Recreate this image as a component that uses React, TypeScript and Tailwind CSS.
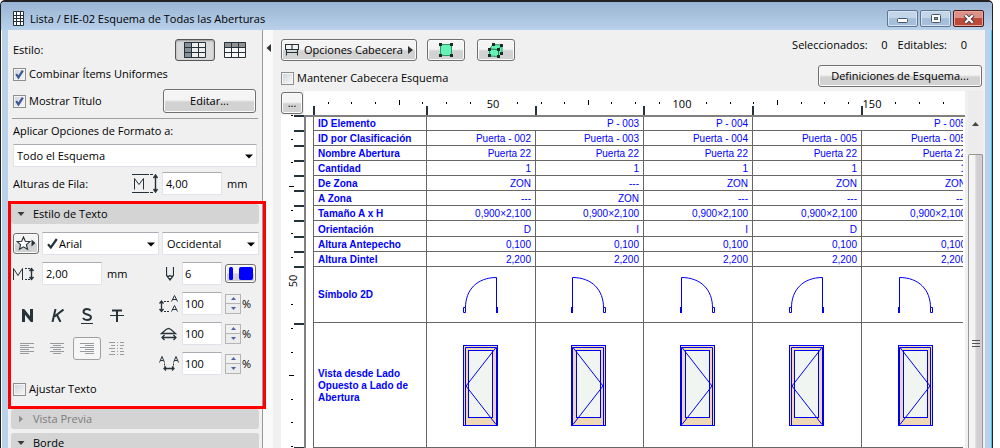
import React, { useState } from 'react';

const INK = '#26323a';
const BLUE = '#0000f0';

const BUTTON =
  'flex items-center justify-center rounded-[3px] border border-[#707070] bg-linear-to-b from-[#f4f4f4] from-45% to-[#d2d2d2] to-55% text-black shadow-[inset_0_0_0_1px_#fbfbfb]';
const FIELD = 'h-[23px] border border-[#e2e3ea] border-t-[#abadb3] bg-white text-[11px] text-black outline-none';

function Check({ id, label, on = false }: { id: string; label: string; on?: boolean }) {
  const [checked, setChecked] = useState(on);
  return (
    <div className="flex items-center gap-[3px]">
      <span className="relative block size-[13px]">
        <input
          id={id}
          type="checkbox"
          checked={checked}
          onChange={(e) => setChecked(e.target.checked)}
          className="block size-[13px] appearance-none border border-[#8e8f8f] bg-linear-to-br from-[#cfd4da] to-[#f8f8f8] shadow-[inset_0_0_0_1px_#f4f4f4]"
        />
        {checked && (
          <svg className="pointer-events-none absolute inset-0" width="13" height="13" viewBox="0 0 13 13">
            <path d="M3.2 6 L5.4 9.4 L9.8 2.6" fill="none" stroke="#3f5796" strokeWidth="2.2" />
          </svg>
        )}
      </span>
      <label htmlFor={id} className="whitespace-nowrap">{label}</label>
    </div>
  );
}

function Select({ id, label, options, className, pad }: { id: string; label?: string; options: string[]; className: string; pad: string }) {
  return (
    <div className={`relative ${className}`}>
      <select id={id} aria-label={label} className={`${FIELD} block w-full appearance-none ${pad}`}>
        {options.map((o) => (
          <option key={o}>{o}</option>
        ))}
      </select>
      <svg className="pointer-events-none absolute top-[10px] right-1" width="8" height="5" viewBox="0 0 8 5">
        <path d="M0 0.5 H8 L4 4.5 Z" fill="#000" />
      </svg>
    </div>
  );
}

function Spinner({ label }: { label: string }) {
  return (
    <div className="ml-[3px] flex h-5 w-4 flex-col">
      <button aria-label={`Aumentar ${label}`} className="flex flex-1 items-center justify-center border border-[#b4b4b4] bg-[#f1f1f1]">
        <svg width="5" height="3" viewBox="0 0 5 3"><path d="M2.5 0 L5 3 H0 Z" fill="#4a62a8" /></svg>
      </button>
      <button aria-label={`Reducir ${label}`} className="flex flex-1 items-center justify-center border border-t-0 border-[#b4b4b4] bg-[#ececec]">
        <svg width="5" height="3" viewBox="0 0 5 3"><path d="M0 0 H5 L2.5 3 Z" fill="#4a62a8" /></svg>
      </button>
    </div>
  );
}

function SectionHeader({ label, open }: { label: string; open: boolean }) {
  return (
    <button
      aria-expanded={open}
      className={`flex h-5 items-center gap-2 rounded-[3px] bg-[#d4d4d4] pl-1.5 text-left ${open ? 'text-black' : 'text-[#7d7d7d]'}`}
    >
      <svg width="8" height="8" viewBox="0 0 8 8">
        {open ? <path d="M0.5 2 H7.5 L4 6 Z" fill="#3a3a3a" /> : <path d="M2 0.5 V7.5 L6 4 Z" fill="#909090" />}
      </svg>
      {label}
    </button>
  );
}

function GridIcon({ side }: { side: 'left' | 'top' }) {
  return (
    <svg width="22" height="16" viewBox="0 0 22 16">
      <rect x="0.5" y="0.5" width="21" height="15" fill="#fff" fillOpacity="0.5" />
      {side === 'left' ? <rect x="0" y="0" width="7" height="16" fill="#87919a" /> : <rect x="0" y="0" width="22" height="5" fill="#8f8f94" />}
      <path d="M0.5 0.5 H21.5 V15.5 H0.5 Z M0 5.5 H22 M0 10.5 H22 M7.5 0 V16 M14.5 0 V16" fill="none" stroke={INK} />
    </svg>
  );
}

function AlignIcon({ kind }: { kind: 'left' | 'center' | 'right' | 'justify' }) {
  const paths = {
    left: 'M1 .5H15M1 2.5H10M1 4.5H15M1 6.5H10M1 8.5H15M1 10.5H10',
    center: 'M1 .5H15M4 2.5H12M1 4.5H15M4 6.5H12M1 8.5H15M4 10.5H12',
    right: 'M1 .5H15M6 2.5H15M1 4.5H15M6 6.5H15M1 8.5H15M6 10.5H15',
    justify:
      'M0 .5H6M8 .5H9M11 .5H15M2 3.5H6M8 3.5H9M11 3.5H15M0 6.5H6M8 6.5H9M11 6.5H14M2 9.5H6M8 9.5H9M11 9.5H15M0 12.5H6M8 12.5H9M11 12.5H15',
  };
  return (
    <svg width="16" height={kind === 'justify' ? 13 : 11} viewBox={kind === 'justify' ? '0 0 16 13' : '0 0 16 11'}>
      <path d={paths[kind]} fill="none" stroke="#989c9f" />
    </svg>
  );
}

function StyleTextSection() {
  const scales = [
    {
      label: 'Interlineado',
      icon: (
        <>
          <path d="M2.5 6.5V16M0.5 8.5L2.5 6L4.5 8.5M0.5 14L2.5 16.5L4.5 14" strokeWidth="1.3" />
          <path d="M5 6.5H11M5 16.5H11" strokeDasharray="2 1" />
          <path d="M12.5 6.5L15.5 0.5L18.5 6.5M13.5 4.5H17.5M12.5 16.5L15.5 10.5L18.5 16.5M13.5 14.5H17.5" />
        </>
      ),
    },
    {
      label: 'Ancho',
      icon: (
        <>
          <path d="M2.5 8.5L7 4.5L9.5 3.5L12 4.5L16.5 8.5ZM4 12.5H16M5.5 10L3 12.5L5.5 15M14.5 10L17 12.5L14.5 15" strokeWidth="1.3" />
        </>
      ),
    },
    {
      label: 'Espaciado',
      icon: (
        <>
          <path d="M0.5 7.5L3 1.5L5.5 7.5M1.5 5.5H4.5M14.5 7.5L17 1.5L19.5 7.5M15.5 5.5H18.5" />
          <path d="M5.5 8.5V12M14.5 8.5V12" strokeDasharray="2 1" />
          <path d="M5 13.5H15M7 11.5L5 13.5L7 15.5M13 11.5L15 13.5L13 15.5" strokeWidth="1.3" />
        </>
      ),
    },
  ];
  return (
    <section className="relative z-10 mt-1.5 -mr-1 flex flex-col border-3 border-[#ff0000] pb-[7px]">
      <div className="mr-1 flex flex-col"><SectionHeader label="Estilo de Texto" open /></div>
      <div className="mt-2 mr-1 ml-0.5 flex items-center gap-[3px]">
        <button aria-label="Favoritos" className={`${BUTTON} h-[21px] w-[26px]`}>
          <svg width="20" height="15" viewBox="0 0 20 15">
            <path d="M7.5 1 L9.3 5.3 L14 5.7 L10.4 8.7 L11.6 13.3 L7.5 10.8 L3.4 13.3 L4.6 8.7 L1 5.7 L5.7 5.3 Z" fill="#fff" stroke={INK} strokeWidth="1.1" />
            <path d="M15.5 3.5 V10.5 L19.5 7 Z" fill={INK} />
          </svg>
        </button>
        <div className="relative w-[117px]">
          <Select id="fuente" label="Fuente" options={['Arial']} className="w-full" pad="pl-4" />
          <svg className="pointer-events-none absolute top-1.5 left-[5px]" width="11" height="11" viewBox="0 0 11 11">
            <path d="M1 6.2 L3.8 9.5 L9.8 1" fill="none" stroke={INK} strokeWidth="2.2" />
          </svg>
        </div>
        <Select id="alfabeto" label="Alfabeto" options={['Occidental']} className="flex-1" pad="pl-1" />
      </div>
      <div className="mt-[7px] mr-[7px] ml-0.5 flex items-center">
        <svg width="29" height="14" viewBox="0 0 29 14" fill="none" stroke={INK}>
          <path d="M0.5 13V1.5L5 8.5L9.5 1.5V13" />
          <path d="M12 1.5H17M12 12.5H17" strokeDasharray="2 1" />
          <path d="M18.5 2V12M16.5 4L18.5 1.5L20.5 4M16.5 10L18.5 12.5L20.5 10" strokeWidth="1.4" />
        </svg>
        <input aria-label="Tamaño de texto" defaultValue="2,00" className={`${FIELD} w-[60px] pl-[3px]`} />
        <span className="ml-[5px]">mm</span>
        <svg className="ml-auto" width="8" height="14" viewBox="0 0 8 14" fill="none" stroke={INK}>
          <path d="M0.5 0V8.5L4 13L7.5 8.5V0M0.5 8.5L2.5 9.5L4 8.5L5.5 9.5L7.5 8.5M4 11V13" strokeWidth="1.2" />
        </svg>
        <input aria-label="Pluma" defaultValue="6" className={`${FIELD} ml-2 w-10 pl-0.5`} />
        <button aria-label="Color de pluma" className={`${BUTTON} ml-[3px] h-[19px] w-[31px]`}>
          <svg width="24" height="13" viewBox="0 0 24 13" fill="#0000ff">
            <rect x="0" y="0" width="4" height="13" rx="1.5" />
            <rect x="10" y="0" width="14" height="13" rx="2" />
          </svg>
        </button>
      </div>
      <div className="mt-[7px] mr-[7px] flex justify-between">
        <div className="flex flex-col gap-2.5 pt-3 pl-0.5">
          <div className="flex h-[23px] items-center gap-0.5">
            <button aria-label="Negrita" className="flex w-7 justify-center">
              <svg width="13" height="13" viewBox="0 0 13 13"><path d="M2.5 13V1.5L10.5 11.5V0" fill="none" stroke={INK} strokeWidth="3" /></svg>
            </button>
            <button aria-label="Cursiva" className="flex w-7 justify-center">
              <svg width="13" height="13" viewBox="0 0 13 13" fill="none" stroke={INK} strokeWidth="2"><path d="M4.5 0L1.5 13M12.5 0.5L3.5 7.5M6 6L9.5 13" /></svg>
            </button>
            <button aria-label="Subrayado" className="flex w-7 justify-center">
              <svg width="14" height="16" viewBox="0 0 14 16" fill="none" stroke={INK}>
                <path d="M10.5 2.5C9.5 1.2 8.5 1 7 1C5 1 3.5 2 3.5 3.8C3.5 7.3 11 5.8 11 9.3C11 11 9.3 12 7 12C5 12 3.8 11.3 3 10" strokeWidth="2" />
                <path d="M1 15.5H13" />
              </svg>
            </button>
            <button aria-label="Tachado" className="flex w-7 justify-center">
              <svg width="14" height="14" viewBox="0 0 14 14" fill="none" stroke={INK}>
                <path d="M2 1.5H12M7 1.5V13" strokeWidth="2" />
                <path d="M0 6.5H14" />
              </svg>
            </button>
          </div>
          <div className="flex h-[23px] items-center gap-0.5">
            {(['left', 'center', 'right', 'justify'] as const).map((k) => (
              <button
                key={k}
                aria-label={`Alineación ${k}`}
                className={`flex h-[23px] w-7 items-center justify-center ${k === 'right' ? 'rounded-[3px] border border-[#a0a0a0] bg-[#f6f6f6]' : ''}`}
              >
                <AlignIcon kind={k} />
              </button>
            ))}
          </div>
        </div>
        <div className="flex flex-col gap-[7px]">
          {scales.map((s) => (
            <div key={s.label} className="flex items-center">
              <svg width="20" height="18" viewBox="0 0 20 18" fill="none" stroke={INK}>{s.icon}</svg>
              <input aria-label={s.label} defaultValue="100" className={`${FIELD} ml-[3px] w-10 pl-[2px]`} />
              <Spinner label={s.label} />
              <span className="ml-px w-[14px]">%</span>
            </div>
          ))}
        </div>
      </div>
      <div className="mt-1 flex h-5 items-center pl-0.5"><Check id="ajustar" label="Ajustar Texto" /></div>
    </section>
  );
}

function Sidebar() {
  return (
    <aside className="flex w-[255px] shrink-0 flex-col border-r border-[#999] *:shrink-0">
      <div className="mt-[9px] flex h-[22px] items-center pl-[5px]">
        <span className="flex-1">Estilo:</span>
        <button aria-label="Cabecera a la izquierda" aria-pressed="true" className="flex h-[22px] w-10 items-center justify-center rounded-[3px] border border-[#555] bg-[#dadada] shadow-[inset_0_1px_2px_#999]">
          <GridIcon side="left" />
        </button>
        <button aria-label="Cabecera arriba" className="mr-4 ml-[9px]"><GridIcon side="top" /></button>
      </div>
      <div className="flex h-[26px] items-center pl-[5px]"><Check id="combinar" label="Combinar Ítems Uniformes" on /></div>
      <div className="mt-0.5 flex h-6 items-center justify-between pr-1.5 pl-[5px]">
        <Check id="titulo" label="Mostrar Título" on />
        <button className={`${BUTTON} h-6 w-[93px]`}>Editar...</button>
      </div>
      <div className="mt-[5px] mr-1 ml-1 h-px bg-[#a0a0a0]" />
      <label htmlFor="ambito" className="mt-0.5 h-5 pl-[5px] leading-5">Aplicar Opciones de Formato a:</label>
      <Select id="ambito" options={['Todo el Esquema']} className="mt-[3px] mr-[5px] ml-[5px]" pad="pl-[3px]" />
      <div className="mt-[5px] flex items-center pl-[5px]">
        <label htmlFor="fila" className="w-[119px]">Alturas de Fila:</label>
        <svg width="30" height="19" viewBox="0 0 30 19" fill="none" stroke={INK}>
          <path d="M0 0.5H14M0 18.5H14" />
          <path d="M14 0.5H22M14 18.5H22" strokeDasharray="3 1" />
          <path d="M2.5 15.5V4.5L7 10.5L11.5 4.5V15.5" />
          <path d="M23.5 2V17M21.5 4L23.5 1L25.5 4M21.5 15L23.5 18L25.5 15" strokeWidth="1.4" />
        </svg>
        <input id="fila" defaultValue="4,00" className={`${FIELD} w-[60px] pl-[3px]`} />
        <span className="ml-[5px]">mm</span>
      </div>
      <StyleTextSection />
      <div className="mr-[3px] ml-[3px] flex flex-col gap-1">
        <SectionHeader label="Vista Previa" open={false} />
        <SectionHeader label="Borde" open />
      </div>
    </aside>
  );
}

type Hand = 'D' | 'I';

function DoorPlan({ hand }: { hand: Hand }) {
  return (
    <svg className="mx-auto block" width="35" height="36" viewBox="0 0 35 36" fill="none" stroke={BLUE}>
      <g transform={hand === 'I' ? 'matrix(-1 0 0 1 35 0)' : undefined}>
        <path d="M0.5 30.5H2.5V35.5H0.5Z" />
        <path d="M2.5 30.5C2.5 13 14 0.5 33.5 0.5V35" />
        <path d="M34 30V36" strokeWidth="2" />
      </g>
    </svg>
  );
}

function DoorView({ hand }: { hand: Hand }) {
  return (
    <svg className="mx-auto block" width="35" height="81" viewBox="0 0 35 81" fill="none" stroke={BLUE}>
      <g transform={hand === 'I' ? 'matrix(-1 0 0 1 35 0)' : undefined}>
        <rect x="0.5" y="0.5" width="34" height="80" fill="#eed8b6" />
        <path d="M2.5 80.5V2.5H33.5V80.5" />
        <rect x="5.5" y="5.5" width="24" height="67" fill="#f0f5f2" />
        <path d="M33 2.5L3 41L33 79.5" />
      </g>
    </svg>
  );
}

const HANDS: Hand[] = ['D', 'I', 'I', 'D', 'I'];
const ROWS: [string, string[]][] = [
  ['ID por Clasificación', ['Puerta - 002', 'Puerta - 003', 'Puerta - 004', 'Puerta - 005', 'Puerta - 005']],
  ['Nombre Abertura', ['Puerta 22', 'Puerta 22', 'Puerta 22', 'Puerta 22', 'Puerta 22']],
  ['Cantidad', ['1', '1', '1', '1', '1']],
  ['De Zona', ['ZON', '---', 'ZON', 'ZON', 'ZON']],
  ['A Zona', ['---', 'ZON', '---', '---', '---']],
  ['Tamaño A x H', ['0,900×2,100', '0,900×2,100', '0,900×2,100', '0,900×2,100', '0,900×2,100']],
  ['Orientación', HANDS],
  ['Altura Antepecho', ['0,100', '0,100', '0,100', '0,100', '0,100']],
  ['Altura Dintel', ['2,200', '2,200', '2,200', '2,200', '2,200']],
];

const LINES = 'border-r border-b border-[#666] px-0 pb-0';
const CELL = `${LINES} pr-1 text-right`;
const HEAD = `${LINES} pl-1 text-left font-bold`;

function Schedule() {
  return (
    <table className="ml-[7px] w-[658px] table-fixed border-separate border-spacing-0 border-l border-[#666] font-['Liberation_Sans',sans-serif] text-[10px] leading-3 text-[#0000ff]">
      <colgroup>
        <col className="w-[113px]" />
        <col className="w-[109px]" />
        <col className="w-[108px]" />
        <col className="w-[109px]" />
        <col className="w-[109px]" />
        <col className="w-[109px]" />
      </colgroup>
      <tbody>
        <tr className="h-[14px]">
          <th scope="row" className={`${HEAD} pt-0`}>ID Elemento</th>
          <td colSpan={2} className={`${CELL} pt-0`}>P - 003</td>
          <td className={`${CELL} pt-0`}>P - 004</td>
          <td colSpan={2} className={`${CELL} pt-0`}>P - 005</td>
        </tr>
        {ROWS.map(([name, values]) => (
          <tr key={name} className={name === 'Orientación' ? 'h-4' : 'h-[15px]'}>
            <th scope="row" className={`${HEAD} pt-0.5`}>{name}</th>
            {values.map((v, i) => (
              <td key={i} className={`${CELL} pt-0.5`}>{v}</td>
            ))}
          </tr>
        ))}
        <tr className="h-14">
          <th scope="row" className={`${HEAD} pt-0`}>Símbolo 2D</th>
          {HANDS.map((h, i) => (
            <td key={i} className={`${LINES} pt-0 pr-0.5`}><DoorPlan hand={h} /></td>
          ))}
        </tr>
        <tr className="h-[125px]">
          <th scope="row" className={`${HEAD} pt-0.5`}>
            Vista desde Lado<br />Opuesto a Lado de<br />Abertura
          </th>
          {HANDS.map((h, i) => (
            <td key={i} className={`${LINES} pt-0 pr-0.5`}><DoorView hand={h} /></td>
          ))}
        </tr>
      </tbody>
    </table>
  );
}

const STEP = 23.65;

function TopRuler() {
  const ticks = Array.from({ length: 80 }, (_, i) => i + 1);
  return (
    <svg className="block h-6 w-full shrink-0 bg-white" aria-label="Regla horizontal">
      {ticks.map((k) => {
        if (k % 8 === 0 && k <= 24) return null;
        const tall = k % 4 === 0;
        return <rect key={k} x={Math.round(k * STEP)} y={tall ? 9 : 11} width="1" height={tall ? 5 : 2} fill="#000" />;
      })}
      {[50, 100, 150].map((n, i) => (
        <text key={n} x={Math.round((i + 1) * 8 * STEP)} y="17" textAnchor="middle" fontSize="11">{n}</text>
      ))}
      {[9, 122, 231, 339, 448, 557].map((x) => (
        <rect key={x} x={x} y="15" width="2" height="9" fill={INK} />
      ))}
    </svg>
  );
}

function SideRuler() {
  const ticks = Array.from({ length: 60 }, (_, i) => i);
  return (
    <svg className="block w-full flex-1 bg-white" aria-label="Regla vertical">
      {ticks.map((k) => {
        if (k === 7) return null;
        const tall = k % 4 === 3;
        return <rect key={k} x={tall ? 8 : 10} y={Math.round(k * STEP)} width={tall ? 5 : 2} height="1" fill="#000" />;
      })}
      <text transform="translate(16 166) rotate(-90)" textAnchor="middle" fontSize="11">50</text>
      {[0, 15, 30, 45, 60, 75, 90, 105, 121, 136, 151, 208, 332].map((y) => (
        <rect key={y} x="13" y={y} width="10" height="2" fill={INK} />
      ))}
    </svg>
  );
}

function Scrollbar() {
  return (
    <div className="ml-[3px] flex w-[15px] shrink-0 flex-col bg-[#ececec] pt-6">
      <button aria-label="Subir" className="flex h-[39px] items-start justify-center pt-[7px]">
        <svg width="7" height="4" viewBox="0 0 7 4"><path d="M3.5 0L7 4H0Z" fill="#444" /></svg>
      </button>
      <div className="flex flex-1 justify-center rounded-t-[2px] border border-b-0 border-[#979797] bg-linear-to-r from-[#f5f5f5] from-40% to-[#cfcfd4] to-60% pt-[185px]">
        <svg width="8" height="8" viewBox="0 0 8 8"><path d="M0 .5H8M0 3.5H8M0 6.5H8" stroke="#555" /></svg>
      </div>
    </div>
  );
}

function Workspace() {
  return (
    <main className="flex min-w-0 flex-1 flex-col pl-2">
      <div className="mt-[9px] flex h-[22px] items-start pr-[18px]">
        <button className={`${BUTTON} h-[22px] w-34 gap-[5px]`}>
          <svg width="14" height="12" viewBox="0 0 14 12" fill="none" stroke={INK}>
            <path d="M0 0.5H14M0 5.5H14M0.5 0.5V5.5M13.5 0.5V5.5M7 0.5V5.5M1.5 5.5V11.5M12.5 5.5V11.5M1.5 8.5H12.5" strokeWidth="1.1" />
          </svg>
          <span className="whitespace-nowrap">Opciones Cabecera</span>
          <svg width="5" height="8" viewBox="0 0 5 8"><path d="M0 0V8L5 4Z" fill="#333" /></svg>
        </button>
        <button aria-label="Seleccionar en planta" className={`${BUTTON} ml-2.5 h-[22px] w-[38px]`}>
          <svg width="14" height="14" viewBox="0 0 14 14">
            <rect x="1.5" y="1.5" width="11" height="11" fill="#66f2b4" stroke="#2a9a62" />
            <path d="M0 0H3V3H0ZM11 0H14V3H11ZM0 11H3V14H0ZM11 11H14V14H11Z" fill="#1c2b28" />
          </svg>
        </button>
        <button aria-label="Seleccionar en 3D" className={`${BUTTON} ml-3 h-[22px] w-[38px]`}>
          <svg width="16" height="15" viewBox="0 0 16 15">
            <path d="M1.5 6L5 1.5L14 2V10L10.5 13.5L1.5 13Z" fill="#66f2b4" stroke="#2a9a62" />
            <path d="M1.5 6L10.5 6.5L14 2M10.5 6.5V13.5" fill="none" stroke="#1f7a4c" />
            <path d="M0 5H3V8H0ZM4 0H7V3H4ZM12 1H15V4H12ZM9 5H12V8H9ZM0 11H3V14H0ZM9 12H12V15H9ZM12 9H15V12H12Z" fill="#1c2b28" />
          </svg>
        </button>
        <div className="ml-auto flex leading-3">
          <span>Seleccionados:</span>
          <span className="w-5 text-right">0</span>
          <span className="ml-2.5">Editables:</span>
          <span className="w-5 text-right">0</span>
        </div>
      </div>
      <div className="mt-1 flex items-center justify-between pr-[3px]">
        <div className="pt-1"><Check id="mantener" label="Mantener Cabecera Esquema" /></div>
        <button className={`${BUTTON} h-[22px] w-[164px] whitespace-nowrap`}>Definiciones de Esquema...</button>
      </div>
      <div className="mt-1 flex min-h-0 flex-1 pr-0.5">
        <div className="flex w-[23px] shrink-0 flex-col">
          <button aria-label="Opciones de regla" className={`${BUTTON} mt-px mb-px h-[22px] w-[22px]`}>...</button>
          <SideRuler />
        </div>
        <div className="flex min-w-0 flex-1 flex-col overflow-hidden bg-white">
          <TopRuler />
          <div className="min-h-0 flex-1 border-t-2 border-l-2 border-[#808080] pr-0.5">
            <div className="h-full overflow-hidden"><Schedule /></div>
          </div>
        </div>
        <Scrollbar />
      </div>
    </main>
  );
}

function TitleBar() {
  const control =
    'flex h-[17px] w-[31px] items-center justify-center rounded-[2px] border border-[#5f7690] bg-linear-to-b from-[#c3d5e8] from-50% to-[#a5bfdb] to-50% shadow-[inset_0_0_0_1px_#d5e3f2]';
  return (
    <header className="flex h-7 shrink-0 items-center bg-linear-to-b from-[#99b4d3] to-[#b9d1ea] pt-[5px] pr-2 pl-3 text-black">
      <svg width="11" height="15" viewBox="0 0 11 15">
        <path d="M0.5 0.5H10.5V14.5H0.5ZM0 4.5H11M0 7.5H11M0 10.5H11M3.5 0V15M7.5 0V15" fill="#fff" stroke={INK} />
      </svg>
      <h1 className="ml-1.5 flex-1">Lista / EIE-02 Esquema de Todas las Aberturas</h1>
      <div className="flex gap-0.5">
        <button aria-label="Minimizar" className={control}>
          <svg width="11" height="9" viewBox="0 0 11 9"><rect x="0.5" y="4.5" width="10" height="4" rx="1" fill="#fff" stroke="#4a5563" /></svg>
        </button>
        <button aria-label="Maximizar" className={control}>
          <svg width="10" height="9" viewBox="0 0 10 9"><rect x="0.5" y="0.5" width="9" height="8" rx="1" fill="#fff" stroke="#4a5563" /><rect x="3.5" y="3.5" width="3" height="2" fill="#8fa9c6" stroke="#4a5563" /></svg>
        </button>
        <button
          aria-label="Cerrar"
          className="flex h-[17px] w-[31px] items-center justify-center rounded-[2px] border border-[#4d1a1a] bg-linear-to-b from-[#dc9188] from-50% to-[#bd4a38] to-50% shadow-[inset_0_0_0_1px_#e5a89f]"
        >
          <svg width="12" height="10" viewBox="0 0 12 10" fill="none">
            <path d="M2 1L10 9M10 1L2 9" stroke="#4a3a44" strokeWidth="4" />
            <path d="M2.3 1.3L9.7 8.7M9.7 1.3L2.3 8.7" stroke="#fff" strokeWidth="2.2" />
          </svg>
        </button>
      </div>
    </header>
  );
}

export default function App() {
  return (
    <div className="flex h-screen overflow-hidden bg-white pr-[7px] font-['Open_Sans',sans-serif] text-[11px] leading-4 text-black">
      <div className="flex min-w-0 flex-1 flex-col overflow-hidden rounded-t-[5px] border-x border-t-2 border-[#222]">
        <TitleBar />
        <div className="flex min-h-0 flex-1 border-r border-l border-r-[#35c3ea] border-l-white bg-[#bad1ea] pr-1.5 pl-[6px]">
          <div className="flex min-w-0 flex-1 bg-[#f0f0f0]">
            <Sidebar />
            <button aria-label="Ocultar panel" className="flex w-2.5 shrink-0 items-start justify-center bg-[#fafafa] pt-3.5">
              <svg width="5" height="8" viewBox="0 0 5 8"><path d="M5 0V8L0.5 4Z" fill="#333" /></svg>
            </button>
            <Workspace />
          </div>
        </div>
      </div>
    </div>
  );
}
